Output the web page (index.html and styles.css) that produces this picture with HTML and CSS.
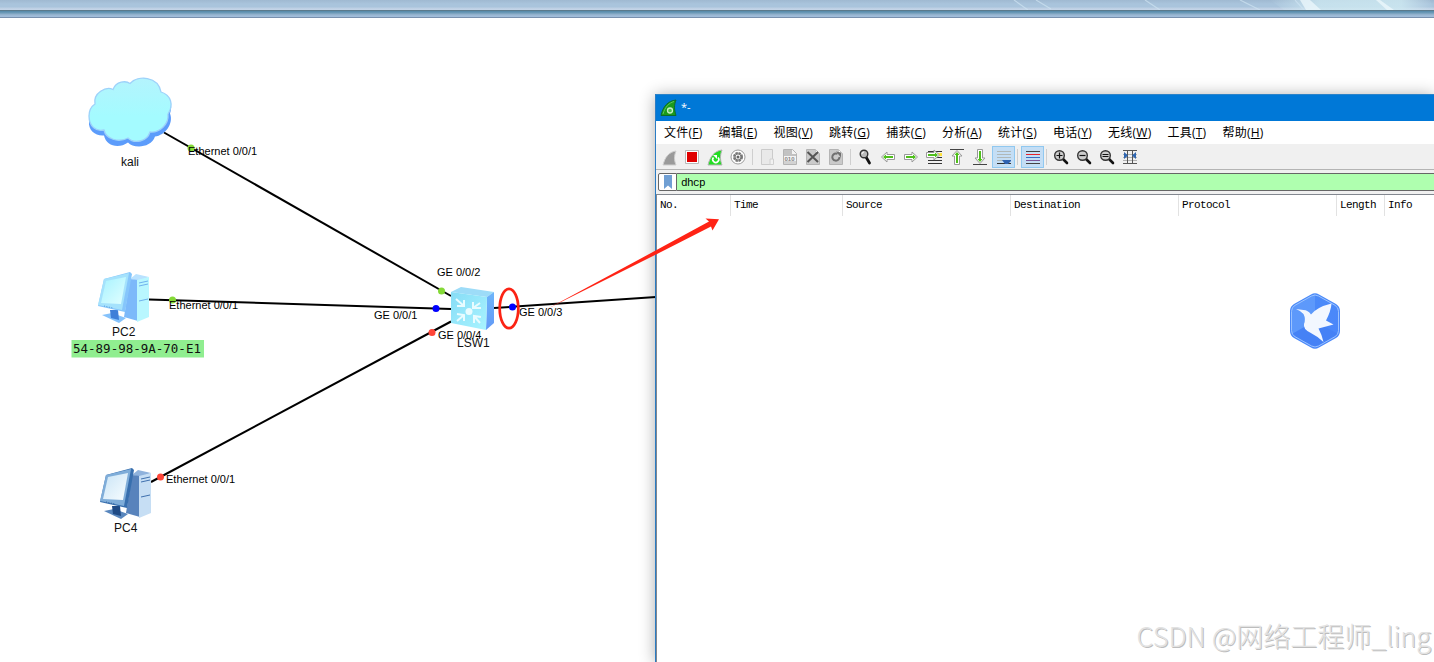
FILE: index.html
```html
<!DOCTYPE html>
<html lang="zh-CN">
<head>
    <meta charset="UTF-8">
    <meta name="viewport" content="width=device-width, initial-scale=1.0">
    <title>eNSP</title>
    <link rel="stylesheet" href="styles.css">
</head>
<body>
    <!-- Top bar -->
    <div class="topbar">
        <svg class="streaks" width="434" height="10" viewBox="1000 0 434 10">
            <defs>
                <linearGradient id="glow" x1="0" x2="1" y1="0" y2="0">
                    <stop offset="0" stop-color="#d4ecf4" stop-opacity="0"/>
                    <stop offset=".3" stop-color="#cfeaf2" stop-opacity=".75"/>
                    <stop offset=".8" stop-color="#cfeaf2" stop-opacity=".8"/>
                    <stop offset="1" stop-color="#d4ecf4" stop-opacity="0"/>
                </linearGradient>
            </defs>
            <path d="M1270 0h160l4 10h-150z" fill="url(#glow)"/>
            <path d="M1300 0h10l11 10h-15zM1376 0h4l14 10h-7z" fill="#eef8fc" opacity=".75"/>
            <path d="M1014 0l14 10M1036 0l15 9M1145 0l15 10M1240 0l20 10M1295 0l9 10" stroke="#cfe4f2" stroke-width="1.2" opacity=".7"/>
        </svg>
    </div>

    <!-- Topology canvas -->
    <svg class="topology" width="1434" height="644" viewBox="0 18 1434 644">
        <defs>
            <linearGradient id="cloud" x1="0" x2="0" y1="0" y2="1">
                <stop offset="0" stop-color="#b4f4fd"/>
                <stop offset=".6" stop-color="#a4fbff"/>
            </linearGradient>
            <linearGradient id="screen" x1="0" x2="1" y1="0" y2="1">
                <stop offset="0" stop-color="#a6f2ff"/>
                <stop offset="1" stop-color="#e2ffff"/>
            </linearGradient>
            <linearGradient id="screen2" x1="0" x2="1" y1="0" y2="1">
                <stop offset="0" stop-color="#c9e4f6"/>
                <stop offset="1" stop-color="#f8fdff"/>
            </linearGradient>
            <linearGradient id="face" x1="0" x2="1" y1="0" y2="1">
                <stop offset="0" stop-color="#86dcf6"/>
                <stop offset="1" stop-color="#a9f4ff"/>
            </linearGradient>
            <linearGradient id="side" x1="0" x2="0" y1="0" y2="1">
                <stop offset="0" stop-color="#6db5fa"/>
                <stop offset="1" stop-color="#6299f6"/>
            </linearGradient>
        </defs>

        <g class="link">
            <path d="M164 132.500L451 296"/>
            <path d="M149 299.500L451 309"/>
            <path d="M151 482L451 321.500"/>
            <path d="M494 308L656 297"/>
        </g>

        <!-- kali -->
        <g>
            <path d="M95 107C95 93 107 88 113 90C117 82 126 81 130 84C139 75 158 76 161 91C170 94 173 103 170 111C174 121 165 133 155 134C151 146 133 146 128 140C118 147 106 143 104 133C96 134 88 128 89 119C89 112 92 109 95 107Z" fill="#5c9cfb" transform="translate(0,2.500)"/>
            <path d="M95 104C93 93 106 86 113 89.500C116 81 126 80.500 130 83.500C138 75 158 76 161 92C171 95 174 105 168 114C169 125 159 133 150 132C147 142 134 144 128 138C118 143 106 139 104 130C96 132 89 126 89 116C89 109 92 106 95 104Z" fill="url(#cloud)" stroke="#9ed2fa" stroke-width="1.300"/>
        </g>
        <!-- PC2 -->
        <g>
            <path d="M130 279l6-5 13 3-10 4z" fill="#b9e2ff"/>
            <path d="M130 279l8 1v41l-14-4z" fill="#7cb9fa"/>
            <path d="M137 280l12-3v40l-12 5z" fill="#b9f7ff"/>
            <path d="M139 283l9-2M139 286l9-2M139 301l9-2" stroke="#6fb2ee" fill="none"/>
            <path d="M102 315l10-2 14 5-7 5z" fill="#85c2fb"/>
            <path d="M110 310h8l1 10-8-2z" fill="#3f7fd8"/>
            <path d="M104 279l26-7 2 2-7 38-27-6z" fill="#86c6fb"/>
            <path d="M104 279l25-6-7 37-24-5z" fill="#a5e2fc"/>
            <path d="M106 281l20-4-5 27-20-1z" fill="url(#screen)"/>
            <path d="M104 306l9 2" stroke="#5599dd" stroke-dasharray="1 1.500"/>
        </g>
        <!-- PC4 -->
        <g transform="translate(2,196)">
            <path d="M130 279l6-5 13 3-10 4z" fill="#8fb2dc"/>
            <path d="M130 279l8 1v41l-14-4z" fill="#5883bc"/>
            <path d="M137 280l12-3v40l-12 5z" fill="#c6def4"/>
            <path d="M139 283l9-2M139 286l9-2M139 301l9-2" stroke="#3f70ae" fill="none"/>
            <path d="M102 315l10-2 14 5-7 5z" fill="#5886bd"/>
            <path d="M110 310h8l1 10-8-2z" fill="#1f4a85"/>
            <path d="M104 279l26-7 2 2-7 38-27-6z" fill="#386fae"/>
            <path d="M104 279l25-6-7 37-24-5z" fill="#7fadd9"/>
            <path d="M106 281l20-4-5 27-20-1z" fill="url(#screen2)"/>
            <path d="M104 306l9 2" stroke="#2f609e" stroke-dasharray="1 1.500"/>
        </g>
        <!-- LSW1 -->
        <g>
            <path d="M451 292l10-5 33 5-7 5z" fill="#9ddcf8"/>
            <path d="M487 297l7-5v31l-8 7z" fill="url(#side)"/>
            <path d="M451 292l36 5-1 33-35-7z" fill="url(#face)"/>
            <g fill="none" stroke="#e9fcff" stroke-width="2">
                <path d="M456 299l8 7M464 300v6h-7M480 303l-7 5M473 302v6h8M457 321l7-6M457 314l7 1v6M480 323l-6-7M481 317l-7-1v7"/>
            </g>
            <circle cx="469" cy="311.500" r="3.500" fill="#e9fcff"/>
        </g>

        <circle class="up" cx="191" cy="148" r="3.500"/>
        <circle class="up" cx="441.500" cy="291" r="3.500"/>
        <circle class="up" cx="172.500" cy="300" r="3.500"/>
        <circle class="capture" cx="436" cy="308.500" r="3.500"/>
        <circle class="capture" cx="512.500" cy="307" r="3.500"/>
        <circle class="down" cx="160.500" cy="477" r="3.500"/>
        <circle class="down" cx="432" cy="332.500" r="3.500"/>

        <g class="port">
            <text x="188" y="155">Ethernet 0/0/1</text>
            <text x="169" y="309">Ethernet 0/0/1</text>
            <text x="166" y="483">Ethernet 0/0/1</text>
            <text x="437" y="276">GE 0/0/2</text>
            <text x="374" y="319">GE 0/0/1</text>
            <text x="438" y="339">GE 0/0/4</text>
            <text x="519" y="316">GE 0/0/3</text>
        </g>
        <g class="name">
            <text x="121" y="166">kali</text>
            <text x="112" y="336">PC2</text>
            <text x="114" y="532">PC4</text>
            <text x="457" y="347">LSW1</text>
        </g>
        <rect x="71.500" y="340" width="132.500" height="17.500" fill="#90ee90"/>
        <text class="mac" x="73" y="352.500">54-89-98-9A-70-E1</text>
    </svg>

    <!-- Wireshark window -->
    <div class="window">
        <div class="titlebar">
            <svg width="18" height="18" viewBox="0 0 18 18">
                <path d="M1 16.500C3 7 8 2 16 1c-2 5-2 9 0 15.500z" fill="#1c9a1c" stroke="#0b6b2c"/>
                <path d="M3 15C5 8 9 4 14 2.500" fill="none" stroke="#5cc85c"/>
                <circle cx="10" cy="11.500" r="2.500" fill="#4ac04a" stroke="#c9f0c9" stroke-width="1.300"/>
            </svg>
            <span class="caption">*-</span>
        </div>
        <div class="menubar">
            <span>文件(<u>F</u>)</span>
            <span>编辑(<u>E</u>)</span>
            <span>视图(<u>V</u>)</span>
            <span>跳转(<u>G</u>)</span>
            <span>捕获(<u>C</u>)</span>
            <span>分析(<u>A</u>)</span>
            <span>统计(<u>S</u>)</span>
            <span>电话(<u>Y</u>)</span>
            <span>无线(<u>W</u>)</span>
            <span>工具(<u>T</u>)</span>
            <span>帮助(<u>H</u>)</span>
        </div>
        <div class="toolbar">
            <svg class="btn" viewBox="0 0 23 22"><path d="M5 19C7 11 11 6 18 5c-2 5-2 9 0 14z" fill="#9a9a9a" stroke="#cfcfcf"/></svg>
            <svg class="btn" viewBox="0 0 23 22"><path d="M4.500 4.500h13v13h-13z" fill="#fff" stroke="#b9b9b9"/><path d="M6 6h10v10H6z" fill="#e00000"/></svg>
            <svg class="btn" viewBox="0 0 23 22"><path d="M4 19C6 11 10 5 18 4c-2 5-2 10 0 15z" fill="#22dd22" stroke="#b5b5b5"/><path d="M9.500 11.500a3 3 0 1 0 4.500 0" fill="none" stroke="#fff" stroke-width="1.600"/><path d="M9 9h4v4z" fill="#fff"/></svg>
            <svg class="btn" viewBox="0 0 23 22"><circle cx="11" cy="11" r="7" fill="#fff" stroke="#9c9c9c"/><circle cx="11" cy="11" r="4" fill="none" stroke="#777" stroke-width="2" stroke-dasharray="2.400 .75"/><circle cx="11" cy="11" r="3.500" fill="#777"/><circle cx="11" cy="11" r="2.400" fill="#fff"/><circle cx="11" cy="11" r="1.500" fill="#666"/></svg>
            <i class="sep"></i>
            <svg class="btn" viewBox="0 0 23 22"><path d="M5.500 3.500h11v15h-11z" fill="#e9e9e9" stroke="#cbcbcb"/><path d="M14 13h3.500v5.500H14z" fill="#f1f1f1" stroke="#d0d0d0"/></svg>
            <svg class="btn" viewBox="0 0 23 22"><path d="M4.500 3.500h9l4 4v11h-13z" fill="#f4f4f4" stroke="#b4b4b4"/><path d="M5 4h8v4h4v2H5z" fill="#c2c2c2"/><path d="M5 15h12v3H5z" fill="#d2d2d2"/><text class="bits" x="5.500" y="15">010</text></svg>
            <svg class="btn" viewBox="0 0 23 22"><path d="M4.500 3.500h9l4 4v11h-13z" fill="#cacaca" stroke="#b4b4b4"/><path d="M13.500 3.500v4h4z" fill="#fff" stroke="#c4c4c4"/><path d="M5.500 6l10.500 10M16 6L5.500 16" stroke="#555" stroke-width="2"/></svg>
            <svg class="btn" viewBox="0 0 23 22"><path d="M4.500 3.500h9l4 4v11h-13z" fill="#cacaca" stroke="#b4b4b4"/><path d="M13.500 3.500v4h4z" fill="#fff" stroke="#c4c4c4"/><path d="M14.500 11a3.600 3.600 0 1 1-2-3.200" fill="none" stroke="#707070" stroke-width="2"/><path d="M11 5.500l5 1v5z" fill="#707070"/></svg>
            <i class="sep"></i>
            <svg class="btn" viewBox="0 0 23 22"><path d="M12 11l3.500 6" stroke="#111" stroke-width="2.800" stroke-linecap="round"/><circle cx="10" cy="8" r="3.800" fill="#bbb" stroke="#333" stroke-width="1.400"/><path d="M8 8q0-2 2-2" fill="none" stroke="#fff"/></svg>
            <svg class="btn" viewBox="0 0 23 22"><path d="M4.500 11L10 6v2.500h7.500v5H10V16z" fill="#fff" stroke="#999"/><path d="M6 11l3-2.500V10h7v2H9v1.500z" fill="#4fbf1c"/></svg>
            <svg class="btn" viewBox="0 0 23 22"><path d="M17.500 11L12 6v2.500H4.500v5H12V16z" fill="#fff" stroke="#999"/><path d="M16 11l-3-2.500V10H6v2h7v1.500z" fill="#4fbf1c"/></svg>
            <svg class="btn" viewBox="0 0 23 22"><path d="M5 5.500h14M5 11.500h14M5 14.500h14M5 17.500h14" stroke="#333"/><path d="M14 7h5v3h-5z" fill="#ffe23c"/><path d="M16.500 9L11 4v2.500H3.500v5H11V14z" fill="#fff" stroke="#999"/><path d="M15 9l-3-2.500V8H5v2h7v1.500z" fill="#4fbf1c"/></svg>
            <svg class="btn" viewBox="0 0 23 22"><path d="M4 3.500h14" stroke="#444"/><path d="M11 4.500l5 5.500h-2.500v8.500h-5V10H6z" fill="#fff" stroke="#999"/><path d="M11 6l2.500 3H12v8h-2V9H8.500z" fill="#4fbf1c"/></svg>
            <svg class="btn" viewBox="0 0 23 22"><path d="M4 18.500h14" stroke="#444"/><path d="M11 17.500l5-5.500h-2.500V3.500h-5V12H6z" fill="#fff" stroke="#999"/><path d="M11 16l2.500-3H12V5h-2v8H8.500z" fill="#4fbf1c"/></svg>
            <svg class="btn pressed" viewBox="0 0 23 22"><path d="M5 5.500h14M5 8.500h14M5 11.500h14M5 14.500h9" stroke="#b0b8b8"/><path d="M5 17.500h14" stroke="#333"/><path d="M10 14h9v1l-3 3h-3z" fill="#2f62b0"/></svg>
            <i class="sep"></i>
            <svg class="btn pressed" viewBox="0 0 23 22"><path d="M5 5.500h14M5 17.500h14" stroke="#444"/><path d="M5 8.500h14" stroke="#e8202a"/><path d="M5 11.500h14" stroke="#3b6cc0"/><path d="M5 14.500h14" stroke="#7a5597"/></svg>
            <i class="sep"></i>
            <svg class="btn" viewBox="0 0 23 22"><path d="M13 13l4 4" stroke="#111" stroke-width="2.600" stroke-linecap="round"/><circle cx="9.500" cy="9.500" r="4.800" fill="#ccc" stroke="#333" stroke-width="1.400"/><path d="M6.500 9.500h6M9.500 6.500v6" stroke="#111" stroke-width="1.200"/></svg>
            <svg class="btn" viewBox="0 0 23 22"><path d="M13 13l4 4" stroke="#111" stroke-width="2.600" stroke-linecap="round"/><circle cx="9.500" cy="9.500" r="4.800" fill="#ccc" stroke="#333" stroke-width="1.400"/><path d="M6.500 9.500h6" stroke="#111" stroke-width="1.200"/></svg>
            <svg class="btn" viewBox="0 0 23 22"><path d="M13 13l4 4" stroke="#111" stroke-width="2.600" stroke-linecap="round"/><circle cx="9.500" cy="9.500" r="4.800" fill="#ccc" stroke="#333" stroke-width="1.400"/><path d="M6.500 8.500h6M6.500 10.500h6" stroke="#111"/></svg>
            <svg class="btn" viewBox="0 0 23 22"><path d="M4 4.500h14M4 17.500h14" stroke="#555"/><path d="M4 8.500h14M4 11.500h14M4 14.500h14" stroke="#b0b0b0"/><path d="M8.500 4v14M13.500 4v14" stroke="#555"/><path d="M5 6l4 3.500L5 13zM17 6l-4 3.500 4 3.500z" fill="#2f66b0"/></svg>
        </div>
        <div class="filterbar">
            <div class="bookmark">
                <svg width="8" height="14" viewBox="0 0 8 14"><path d="M0 0h8v14l-4-3.500L0 14z" fill="#709fd3"/></svg>
            </div>
            <div class="filter">dhcp</div>
        </div>
        <div class="packets">
            <div class="columns">
                <span>No.</span>
                <span>Time</span>
                <span>Source</span>
                <span>Destination</span>
                <span>Protocol</span>
                <span>Length</span>
                <span>Info</span>
            </div>
        </div>
    </div>

    <!-- Floating bird badge -->
    <svg class="badge" width="52" height="58" viewBox="1289 292 52 58">
        <defs>
            <linearGradient id="hex" x1="0" x2="1" y1="0" y2="1">
                <stop offset="0" stop-color="#4a8bf8"/>
                <stop offset="1" stop-color="#4a86fa"/>
            </linearGradient>
        </defs>
        <path d="M1311 294.500q4-2.500 8 0l17 9.500q4 2.500 4 7v20q0 4.500-4 7l-17 9.500q-4 2.500-8 0l-17-9.500q-4-2.500-4-7v-20q0-4.500 4-7z" fill="url(#hex)"/>
        <path d="M1315 321v-27l-23 13v27z" fill="#6aa3fb" opacity=".6"/>
        <path d="M1315 321l23 13-23 14-23-14z" fill="#3b76ee" opacity=".35"/>
        <path d="M1311.500 296q3.500-2 7 0l16.500 9.300q3.500 2.200 3.500 6v19.400q0 4-3.500 6l-16.500 9.300q-3.500 2-7 0l-16.500-9.300q-3.500-2-3.500-6v-19.400q0-4 3.500-6z" fill="none" stroke="#a5c9ff" stroke-width=".9"/>
        <path d="M1296 309L1303.500 310Q1308 310 1311 314.500Q1317 307 1331.500 303.500Q1331 311 1326 320.500L1333.500 324.500L1318.500 328.500Q1322 335 1323.500 342Q1317 336 1310 332.500Q1303 329 1304 324Q1306 319 1303.500 314Q1301 311 1296 309Z" fill="#f2f7ff"/>
    </svg>

    <!-- Red annotations -->
    <svg class="marks" width="230" height="120" viewBox="495 213 230 120">
        <ellipse cx="509" cy="308.500" rx="9.300" ry="19.700" fill="none" stroke="#fb2314" stroke-width="2.700"/>
        <path d="M547 309L657 249.800L709 221.500L705.500 218.500L719 219.300L712.500 230.500L711 226.500L657 254Z" fill="#ff2315"/>
    </svg>

    <div class="watermark">CSDN @网络工程师_ling</div>
</body>
</html>
```

FILE: styles.css
```css
* { margin: 0; padding: 0; box-sizing: border-box; }

body {
    position: relative;
    width: 1434px;
    height: 662px;
    overflow: hidden;
    background: #fff;
    font-family: "Liberation Sans", "Noto Sans CJK SC", sans-serif;
    color: #000;
}

svg { display: block; }

/* Top bar */
.topbar {
    display: flex;
    justify-content: flex-end;
    height: 18px;
    background: linear-gradient(#9fb9d1 0, #a9c4dc 4px, #a9c4dc 7px, #bccfe3 8px, #c6d6e8 10px, #5b7a8b 10px, #5b7a8b 11px, #5488a8 11px, #6f9dba 13px, #8aabc6 14px, #9ab7d3 15px, #a3bedb 17px, #7890ae 17px, #7890ae 18px);
}

/* Topology */
.link path { stroke: #000; stroke-width: 2; fill: none; }
.up { fill: #84d936; }
.down { fill: #ff4538; }
.capture { fill: #0000ff; }
.port { font-size: 11px; }
.name { font-size: 12px; fill: #111; }
.mac { font-family: "DejaVu Sans Mono", monospace; font-size: 12.500px; fill: #111; }

/* Wireshark window */
.window {
    position: absolute;
    left: 655px;
    top: 94px;
    width: 779px;
    height: 568px;
    display: flex;
    flex-direction: column;
    border-left: 1px solid #2a7cc4;
    background: #fff;
    box-shadow: 0 1px 15px rgba(0, 0, 0, .32);
}

.titlebar {
    display: flex;
    align-items: center;
    height: 27px;
    padding-left: 4px;
    border-top: 1px solid #2b83c9;
    background: #0078d7;
    color: #fff;
}

.caption {
    margin-left: 3px;
    font-family: "Open Sans", sans-serif;
    font-size: 11px;
    line-height: 22px;
    padding-bottom: 2px;
}

.menubar {
    display: flex;
    align-items: center;
    height: 23px;
    font-family: "Open Sans", "Noto Sans CJK SC", sans-serif;
    font-size: 12px;
    letter-spacing: .25px;
    line-height: 23px;
}

.menubar span { padding: 0 8px; white-space: nowrap; }
.menubar u { text-underline-offset: 1px; }

.toolbar {
    display: flex;
    align-items: flex-start;
    height: 26px;
    padding: 2px 0 0 2px;
    border-bottom: 1px solid #b4b4b4;
    background: #f0f0f0;
}

.btn { flex: none; width: 23px; height: 22px; }

.pressed {
    background: #c4def5;
    box-shadow: inset 0 0 0 1px #90c8f0;
}

.sep {
    flex: none;
    width: 1px;
    height: 16px;
    margin: 3px 3px 0 2px;
    background: #cfcfcf;
}

.bits { font-size: 6px; font-weight: bold; fill: #888; }

/* Display filter */
.filterbar {
    display: flex;
    height: 24px;
    padding: 3px 0 3px 2px;
    background: #f0f0f0;
}

.bookmark {
    display: flex;
    align-items: center;
    justify-content: center;
    width: 19px;
    border: 1px solid #666;
    border-radius: 2px 0 0 2px;
    background: #fff;
}

.filter {
    flex: 1;
    padding-left: 4px;
    border-top: 1px solid #666;
    border-bottom: 1px solid #666;
    background: #afffaf;
}

.filter, .columns {
    font-family: "Liberation Mono", monospace;
    font-size: 11px;
    letter-spacing: -.6px;
    line-height: 18px;
}

/* Packet list */
.packets {
    flex: 1;
    border-top: 1px solid #82878f;
    border-left: 1px solid #82878f;
}

.columns {
    display: grid;
    grid-template-columns: 74px 112px 168px 168px 158px 48px 1fr;
    height: 20px;
    line-height: 21px;
}

.columns span { padding-left: 3px; border-right: 1px solid #e2e2e2; }
.columns span:last-child { border-right: 0; }

.badge { position: absolute; left: 1289px; top: 292px; }
.marks { position: absolute; left: 495px; top: 213px; }

.watermark {
    position: absolute;
    right: 3px;
    top: 617px;
    font-family: "Noto Sans CJK SC", sans-serif;
    font-size: 27px;
    font-weight: 300;
    line-height: 38px;
    white-space: nowrap;
    color: #e2e2e2;
    text-shadow: 1px 1px 0 #bdbdbd;
}
```
